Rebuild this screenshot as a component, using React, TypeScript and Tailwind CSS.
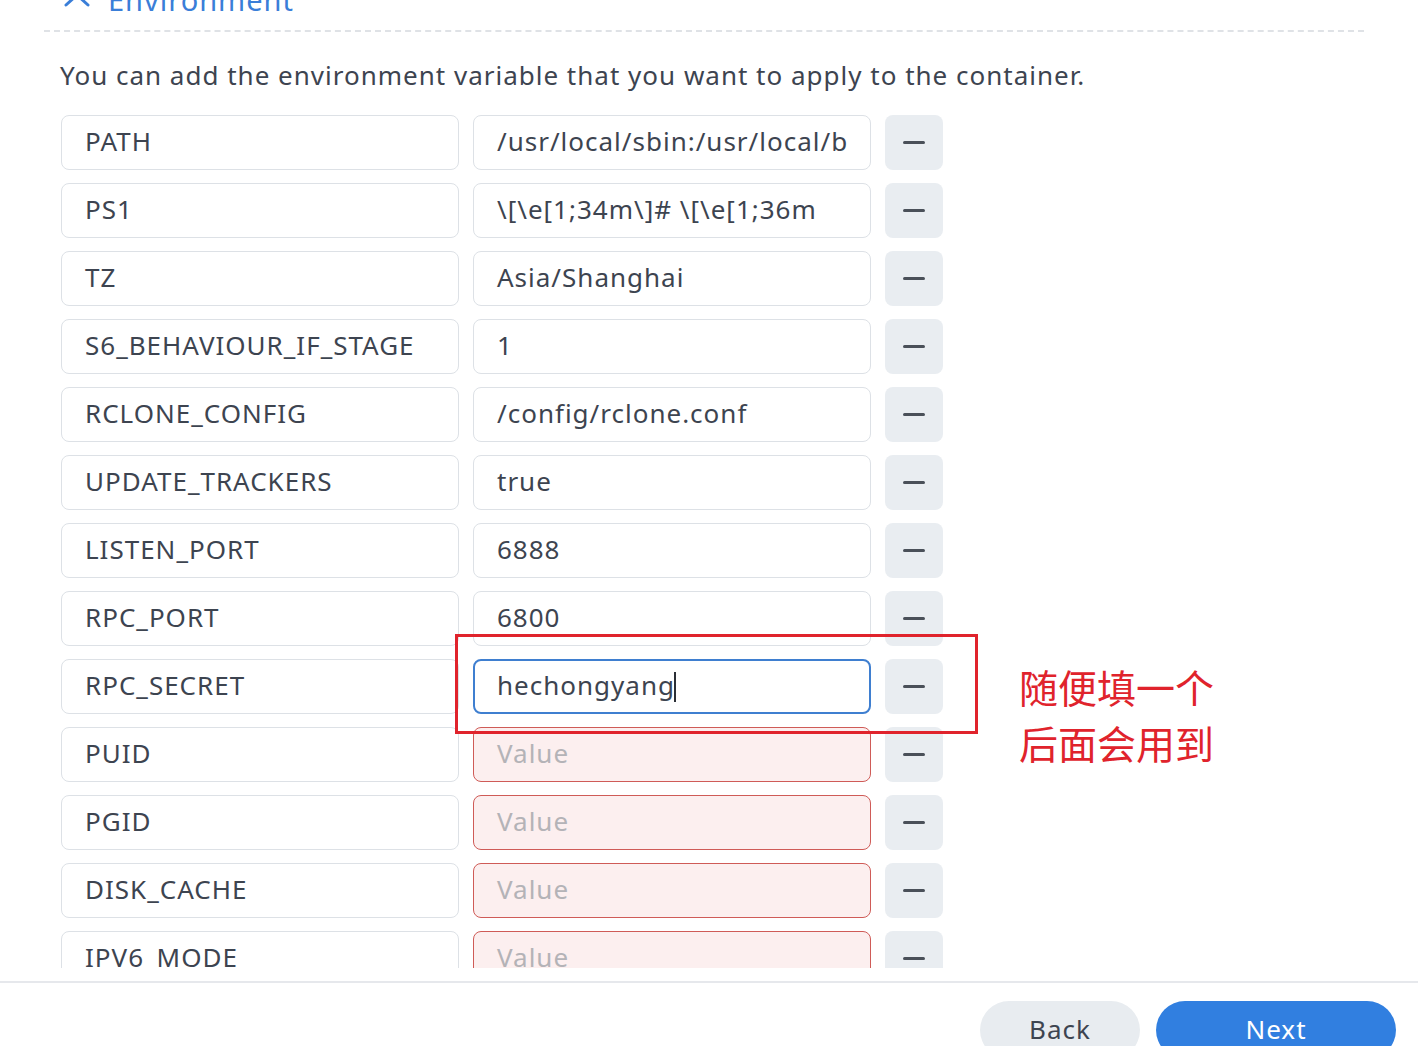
import React from 'react';

type EnvRow = {
  key: string;
  value: string;
  state?: 'focused' | 'error';
};

const rows: EnvRow[] = [
  { key: 'PATH', value: '/usr/local/sbin:/usr/local/b' },
  { key: 'PS1', value: '\\[\\e[1;34m\\]# \\[\\e[1;36m' },
  { key: 'TZ', value: 'Asia/Shanghai' },
  { key: 'S6_BEHAVIOUR_IF_STAGE', value: '1' },
  { key: 'RCLONE_CONFIG', value: '/config/rclone.conf' },
  { key: 'UPDATE_TRACKERS', value: 'true' },
  { key: 'LISTEN_PORT', value: '6888' },
  { key: 'RPC_PORT', value: '6800' },
  { key: 'RPC_SECRET', value: 'hechongyang', state: 'focused' },
  { key: 'PUID', value: '', state: 'error' },
  { key: 'PGID', value: '', state: 'error' },
  { key: 'DISK_CACHE', value: '', state: 'error' },
  { key: 'IPV6_MODE', value: '', state: 'error' },
];

const font = { fontFamily: '"Noto Sans", "Noto Sans CJK SC", sans-serif' };

const ValueBox: React.FC<{ row: EnvRow }> = ({ row }) => {
  if (row.state === 'error') {
    return (
      <div className="flex h-[55px] w-[398px] items-center rounded-[8px] border border-[#cf5b57] bg-[#fcefef] pb-[3px] pl-[23px] text-[#b4b3b7]">
        Value
      </div>
    );
  }
  if (row.state === 'focused') {
    return (
      <div className="flex h-[55px] w-[398px] items-center rounded-[8px] border-2 border-[#3f7fd0] bg-white pb-[3px] pl-[22px] text-[#3d4450]">
        <span>{row.value}</span>
        <span className="ml-[-1px] mt-[3px] h-[30px] w-[2px] bg-[#2b2f36]" />
      </div>
    );
  }
  return (
    <div className="flex h-[55px] w-[398px] items-center overflow-hidden whitespace-nowrap rounded-[8px] border border-[#dde1e6] bg-white pb-[3px] pl-[23px] text-[#3d4450]">
      {row.value}
    </div>
  );
};

const App: React.FC = () => {
  return (
    <div className="flex h-[1046px] w-full flex-col overflow-hidden bg-white tracking-[1px]" style={font}>
      {/* scrollable form area */}
      <div className="h-[968px] shrink-0 overflow-hidden">
        <div className="mt-[-20px] flex h-[40px] items-center pl-[64px] text-[29px] leading-[40px] text-[#3a7ed8]">
          <svg width="26" height="16" viewBox="0 0 26 16" fill="none" className="mr-[18px]">
            <path d="M2 13 L13 3 L24 13" stroke="#3a7ed8" strokeWidth="3" strokeLinecap="round" strokeLinejoin="round" />
          </svg>
          <span>Environment</span>
        </div>
        <div className="ml-[44px] mr-[54px] mt-[10px] border-t-2 border-dashed border-[#dfe2e6]" />

        <p className="ml-[60px] mt-[25px] text-[26px] leading-[36px] text-[#3d4450]">
          You can add the environment variable that you want to apply to the container.
        </p>

        <div className="relative mt-[22px] flex flex-col gap-[13px] pl-[61px] text-[26px]">
          {rows.map((row) => (
            <div key={row.key} className="flex gap-[14px]">
              <div className="flex h-[55px] w-[398px] items-center whitespace-nowrap rounded-[8px] border border-[#dde1e6] bg-white pb-[3px] pl-[23px] text-[#3d4450]">
                {row.key}
              </div>
              <ValueBox row={row} />
              <button className="flex h-[55px] w-[58px] items-center justify-center rounded-[8px] bg-[#e9edf1]">
                <span className="h-[3px] w-[22px] rounded-full bg-[#4a5059]" />
              </button>
            </div>
          ))}

          {/* annotation overlay */}
          <div className="pointer-events-none absolute left-[455px] top-[519px] h-[100px] w-[523px] border-[3px] border-[#e0232c]" />
          <div className="absolute left-[1019px] top-[545px] text-[39px] leading-[56px] tracking-normal text-[#e0232c]">
            <div>随便填一个</div>
            <div>后面会用到</div>
          </div>
        </div>
      </div>

      {/* footer */}
      <div className="mt-[13px] shrink-0 border-t-2 border-[#e6e8ec]" />
      <div className="flex shrink-0 justify-end gap-[16px] pr-[22px] pt-[18px]">
        <button className="h-[58px] w-[160px] rounded-full bg-[#e8ecf0] pb-[2px] text-[26px] text-[#3d4450]">Back</button>
        <button className="h-[58px] w-[240px] rounded-full bg-[#317fe0] pb-[2px] text-[26px] text-white">Next</button>
      </div>
    </div>
  );
};

export default App;
